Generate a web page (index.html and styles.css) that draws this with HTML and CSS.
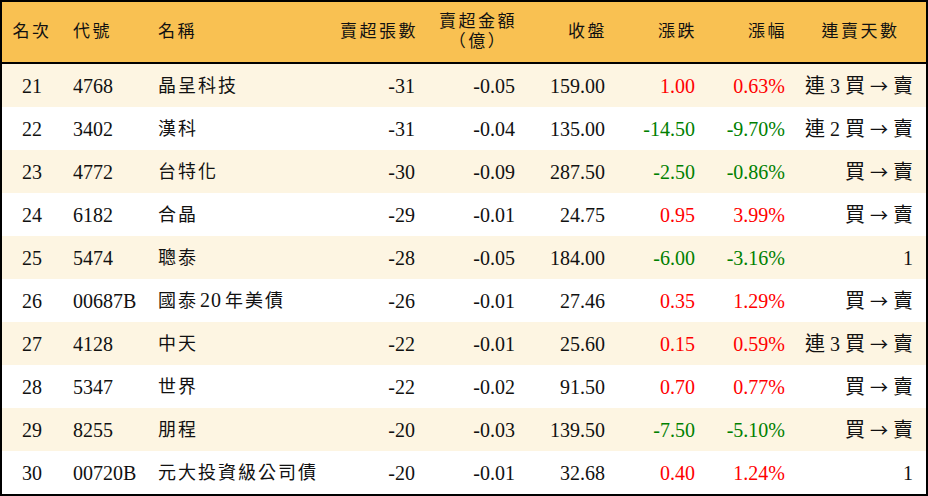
FILE: index.html
```html
<!DOCTYPE html>
<html lang="zh-Hant">
<head>
<meta charset="utf-8">
<link rel="stylesheet" href="styles.css">
</head>
<body>
<table class="board">
  <colgroup>
    <col class="c-rank"><col class="c-code"><col class="c-name"><col class="c-vol"><col class="c-amt"><col class="c-close"><col class="c-chg"><col class="c-pct"><col class="c-days">
  </colgroup>
  <thead>
    <tr>
      <th class="ctr">名次</th>
      <th class="lft">代號</th>
      <th class="lft">名稱</th>
      <th class="rgt">賣超張數</th>
      <th class="rgt"><span class="stack">賣超金額<br>（億）</span></th>
      <th class="rgt">收盤</th>
      <th class="rgt">漲跌</th>
      <th class="rgt">漲幅</th>
      <th class="ctr days-h">連賣天數</th>
    </tr>
  </thead>
  <tbody>
    <tr><td class="ctr">21</td><td class="lft">4768</td><td class="lft name">晶呈科技</td><td class="rgt">-31</td><td class="rgt">-0.05</td><td class="rgt">159.00</td><td class="rgt up">1.00</td><td class="rgt up">0.63%</td><td class="rgt days">連 3 買 <span class="arr">→</span> 賣</td></tr>
    <tr><td class="ctr">22</td><td class="lft">3402</td><td class="lft name">漢科</td><td class="rgt">-31</td><td class="rgt">-0.04</td><td class="rgt">135.00</td><td class="rgt down">-14.50</td><td class="rgt down">-9.70%</td><td class="rgt days">連 2 買 <span class="arr">→</span> 賣</td></tr>
    <tr><td class="ctr">23</td><td class="lft">4772</td><td class="lft name">台特化</td><td class="rgt">-30</td><td class="rgt">-0.09</td><td class="rgt">287.50</td><td class="rgt down">-2.50</td><td class="rgt down">-0.86%</td><td class="rgt days">買 <span class="arr">→</span> 賣</td></tr>
    <tr><td class="ctr">24</td><td class="lft">6182</td><td class="lft name">合晶</td><td class="rgt">-29</td><td class="rgt">-0.01</td><td class="rgt">24.75</td><td class="rgt up">0.95</td><td class="rgt up">3.99%</td><td class="rgt days">買 <span class="arr">→</span> 賣</td></tr>
    <tr><td class="ctr">25</td><td class="lft">5474</td><td class="lft name">聰泰</td><td class="rgt">-28</td><td class="rgt">-0.05</td><td class="rgt">184.00</td><td class="rgt down">-6.00</td><td class="rgt down">-3.16%</td><td class="rgt days">1</td></tr>
    <tr><td class="ctr">26</td><td class="lft">00687B</td><td class="lft name">國泰<span class="num">20</span>年美債</td><td class="rgt">-26</td><td class="rgt">-0.01</td><td class="rgt">27.46</td><td class="rgt up">0.35</td><td class="rgt up">1.29%</td><td class="rgt days">買 <span class="arr">→</span> 賣</td></tr>
    <tr><td class="ctr">27</td><td class="lft">4128</td><td class="lft name">中天</td><td class="rgt">-22</td><td class="rgt">-0.01</td><td class="rgt">25.60</td><td class="rgt up">0.15</td><td class="rgt up">0.59%</td><td class="rgt days">連 3 買 <span class="arr">→</span> 賣</td></tr>
    <tr><td class="ctr">28</td><td class="lft">5347</td><td class="lft name">世界</td><td class="rgt">-22</td><td class="rgt">-0.02</td><td class="rgt">91.50</td><td class="rgt up">0.70</td><td class="rgt up">0.77%</td><td class="rgt days">買 <span class="arr">→</span> 賣</td></tr>
    <tr><td class="ctr">29</td><td class="lft">8255</td><td class="lft name">朋程</td><td class="rgt">-20</td><td class="rgt">-0.03</td><td class="rgt">139.50</td><td class="rgt down">-7.50</td><td class="rgt down">-5.10%</td><td class="rgt days">買 <span class="arr">→</span> 賣</td></tr>
    <tr><td class="ctr">30</td><td class="lft">00720B</td><td class="lft name">元大投資級公司債</td><td class="rgt">-20</td><td class="rgt">-0.01</td><td class="rgt">32.68</td><td class="rgt up">0.40</td><td class="rgt up">1.24%</td><td class="rgt days">1</td></tr>
  </tbody>
</table>
</body>
</html>
```

FILE: styles.css
```css
html, body {
  margin: 0;
  padding: 0;
  background: #ffffff;
}

.board {
  width: 928px;
  border: 2px solid #000;
  border-collapse: separate;
  border-spacing: 0;
  table-layout: fixed;
  font-family: "Liberation Serif", "Noto Sans CJK TC", serif;
  font-size: 20px;
  color: #111;
}

.c-rank { width: 60px; }
.c-code { width: 85px; }
.c-name { width: 183px; }
.c-vol { width: 95px; }
.c-amt { width: 100px; }
.c-close { width: 90px; }
.c-chg { width: 90px; }
.c-pct { width: 90px; }
.c-days { width: 131px; }

.board th {
  background: #f9c152;
  height: 60px;
  padding: 0 10px;
  font-weight: normal;
  line-height: 20px;
  border-bottom: 2px solid #000;
  font-size: 17px;
  letter-spacing: 2.5px;
  white-space: nowrap;
}

.board td {
  height: 43px;
  padding: 0 10px;
  line-height: 20px;
  white-space: nowrap;
}

.board tbody tr:nth-child(odd) td {
  background: #fdf5e2;
}

.ctr { text-align: center; }
.lft { text-align: left; }
.rgt { text-align: right; }

.board th.lft, .board td.lft { padding-left: 11px; }
.board th.rgt { padding-right: 8px; }
.board td.ctr { padding: 0; }
.board th.ctr { padding: 0; }

.board td.name {
  font-size: 18px;
  letter-spacing: 2px;
}

.num {
  font-size: 20px;
  letter-spacing: 1px;
  padding: 0 3px 0 2px;
}

.board td.days { padding-right: 13px; }
.board th.days-h { padding: 0; }

.arr {
  font-family: "Noto Sans CJK TC", sans-serif;
  font-size: 18px;
}

.stack {
  display: inline-block;
  text-align: center;
}

.up { color: #ff0000; }
.down { color: #008000; }
```
